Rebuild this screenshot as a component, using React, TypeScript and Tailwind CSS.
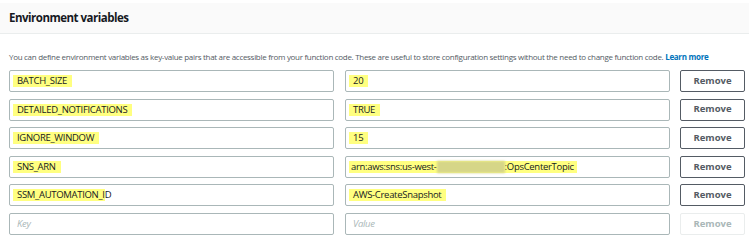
import React from "react";

const F = { fontFamily: '"Open Sans", "Liberation Sans", sans-serif' };

type Row = { k: React.ReactNode; v: React.ReactNode };

const HL = ({ children }: { children: React.ReactNode }) => (
  <span className="inline-block bg-[#ffff80] pl-[4px] pr-[5px] h-[12px] leading-[12px]">{children}</span>
);

const rows: Row[] = [
  { k: <HL>BATCH_SIZE</HL>, v: <HL>20</HL> },
  { k: <HL>DETAILED_NOTIFICATIONS</HL>, v: <HL>TRUE</HL> },
  { k: <HL>IGNORE_WINDOW</HL>, v: <HL>15</HL> },
  {
    k: <HL>SNS_ARN</HL>,
    v: (
      <span className="inline-flex items-center bg-[#ffff80] pl-[2px] pr-[3px] h-[12px] leading-[12px]">
        arn:aws:sns:us-west-
        <span className="inline-block w-[68px] h-[12px] bg-[#d6d688] blur-[1px]" />
        :OpsCenterTopic
      </span>
    ),
  },
  {
    k: (
      <span className="leading-[12px]">
        <span className="inline-block bg-[#ffff80] pl-[4px] h-[12px] leading-[12px]">SSM_AUTOMATION_I</span>D
      </span>
    ),
    v: <HL>AWS-CreateSnapshot</HL>,
  },
];

const inputCls =
  "w-[325px] h-[22px] border border-[#aab7b8] rounded-[2px] flex items-center pl-[3px] text-[9.5px] tracking-[-0.3px] text-[#16191f]";

export default function App() {
  return (
    <div className="w-[752px] h-[241px] bg-white text-[#16191f]" style={F}>
      <div className="pt-[3px] pr-[3px]">
        <div className="h-[31px] bg-[#fafafa] border-b border-[#eaeded] flex items-center pl-[9px]">
          <span className="text-[11.5px] font-bold tracking-[-0.5px] text-[#16191f]">Environment variables</span>
        </div>
      </div>
      <div className="pl-[9px] pr-[7px]">
        <p className="text-[8px] tracking-[-0.3px] whitespace-nowrap text-[#545b64] mt-[17px] leading-[12px]">
          You can define environment variables as key-value pairs that are accessible from your function code. These are useful to store configuration settings without the need to change function code.{" "}
          <span className="font-bold text-[#0073bb]">Learn more</span>
        </p>
        <div className="mt-[7px] flex flex-col gap-[6.6px]">
          {rows.map((r, i) => (
            <div key={i} className="flex items-center">
              <div className={inputCls}>{r.k}</div>
              <div className={"ml-[11px] " + inputCls}>{r.v}</div>
              <div className="ml-[10px] w-[65px] h-[22px] border border-[#545b64] rounded-[2px] flex items-center justify-center text-[9.5px] font-bold text-[#545b64]">
                Remove
              </div>
            </div>
          ))}
          <div className="flex items-center">
            <div className="w-[325px] h-[22px] border border-[#aab7b8] rounded-[2px] flex items-center pl-[7px] text-[9.5px] tracking-[-0.3px] italic text-[#aab7b8]">
              Key
            </div>
            <div className="ml-[11px] w-[325px] h-[22px] border border-[#aab7b8] rounded-[2px] flex items-center pl-[7px] text-[9.5px] tracking-[-0.3px] italic text-[#aab7b8]">
              Value
            </div>
            <div className="ml-[10px] w-[65px] h-[22px] border border-[#eaeded] rounded-[2px] flex items-center justify-center text-[9.5px] font-bold text-[#aab7b8]">
              Remove
            </div>
          </div>
        </div>
      </div>
    </div>
  );
}
